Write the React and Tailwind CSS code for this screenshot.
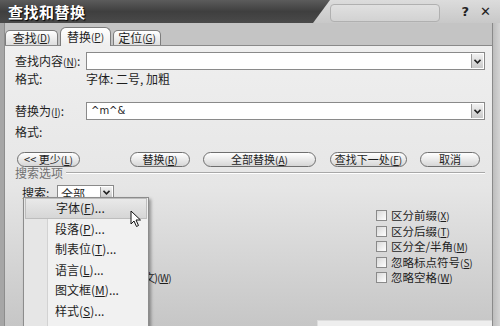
import React from 'react';

const font = { fontFamily: '"Noto Sans CJK SC", "Noto Sans", sans-serif' };

function Key({ k }) {
  return <span className="text-[10px]">(<span className="underline">{k}</span>)</span>;
}

function Arrow() {
  return (
    <div className="w-[12px] h-full flex items-center justify-center bg-gradient-to-b from-[#f2f2f2] to-[#c9c9c9] border-l border-[#9a9a9a]">
      <svg width="7" height="5" viewBox="0 0 7 5">
        <path d="M0.5 0.8 L3.5 3.8 L6.5 0.8" fill="none" stroke="#222" strokeWidth="1.6" />
      </svg>
    </div>
  );
}

function Pill({ children, className = '' }) {
  return (
    <div className={`h-[15px] rounded-full border border-[#6f6f6f] bg-gradient-to-b from-white to-[#d6d6d6] flex items-center justify-center text-[11px] leading-none text-[#1e1e1e] ${className}`}>
      {children}
    </div>
  );
}

function Check({ label, k }) {
  return (
    <div className="h-[15.5px] flex items-center gap-[4px]">
      <div className="w-[11px] h-[11px] border border-[#8a8a8a] bg-gradient-to-br from-[#d9d9d9] to-white" />
      <span className="text-[11.5px] leading-none text-[#1e1e1e]">{label}<Key k={k} /></span>
    </div>
  );
}

const menuItems = [
  ['字体', 'F'],
  ['段落', 'P'],
  ['制表位', 'T'],
  ['语言', 'L'],
  ['图文框', 'M'],
  ['样式', 'S'],
];

export default function App() {
  return (
    <div style={font} className="w-[500px] h-[326px] relative overflow-hidden bg-[#c4c4c4] select-none">
      {/* title bar */}
      <div className="h-[23px] flex relative bg-gradient-to-b from-[#dcdcdc] to-[#c8c8c8]">
        <div className="w-[330px] h-full bg-gradient-to-b from-[#5c5c5c] via-[#3f3f3f] to-[#4a4a4a] [clip-path:polygon(0_0,330px_0,313px_100%,0_100%)] flex items-center pl-[8px]">
          <span className="text-white text-[15px] font-bold leading-none tracking-[0.5px] [text-shadow:1px_1px_1px_#000]">查找和替换</span>
        </div>
        <div className="mt-[4px] w-[110px] h-[18px] rounded-[4px] border border-[#b0b0b0] bg-gradient-to-b from-[#e0e0e0] to-[#d2d2d2]" />
        <div className="ml-auto flex items-center gap-[11px] pr-[9px] text-[#222] font-bold" style={{ fontFamily: '"DejaVu Sans", sans-serif' }}>
          <span className="text-[13px] leading-none">?</span>
          <span className="text-[13px] leading-none">✕</span>
        </div>
      </div>

      <div className="flex h-[303px]">
        <div className="w-[5px] bg-[#a6a6a6] border-r border-[#8d8d8d]" />
        <div className="flex-1 flex flex-col">
          {/* tabs */}
          <div className="h-[22px] flex items-end gap-[2px] text-[12px] leading-none text-[#1e1e1e]">
            <div className="w-[53px] h-[15px] rounded-t-[5px] border border-b-0 border-[#7d7d7d] bg-gradient-to-b from-white to-[#dedede] flex items-center justify-center">
              查找<Key k="D" />
            </div>
            <div className="w-[51px] h-[19px] rounded-t-[6px] border border-b-0 border-[#7d7d7d] bg-gradient-to-b from-white to-[#eeeeee] flex items-center justify-center relative top-[1px] z-10">
              替换<Key k="P" />
            </div>
            <div className="w-[48px] h-[15px] rounded-t-[5px] border border-b-0 border-[#7d7d7d] bg-gradient-to-b from-white to-[#dedede] flex items-center justify-center">
              定位<Key k="G" />
            </div>
          </div>

          {/* panel */}
          <div className="flex-1 border-t border-[#8a8a8a] bg-gradient-to-b from-[#efefef] via-[#e6e6e6] to-[#c6c6c6] pl-[10px] pr-[7px] text-[12px] text-[#1e1e1e] flex flex-col">
            <div className="mt-[6px] h-[18px] flex items-center">
              <span className="w-[71px] leading-none">查找内容<Key k="N" />:</span>
              <div className="flex-1 h-full bg-white border border-[#8a8a8a] flex justify-end p-[1px]"><Arrow /></div>
            </div>
            <div className="h-[17px] flex items-center leading-none">
              <span className="w-[71px]">格式:</span>
              <span>字体: 二号, 加粗</span>
            </div>
            <div className="mt-[15px] h-[18px] flex items-center">
              <span className="w-[71px] leading-none">替换为<Key k="I" />:</span>
              <div className="flex-1 h-full bg-white border border-[#8a8a8a] flex items-center justify-between p-[1px]">
                <span className="pl-[3px] text-[10px] leading-none" style={{ fontFamily: '"DejaVu Sans", sans-serif' }}>^m^&amp;</span>
                <Arrow />
              </div>
            </div>
            <div className="mt-[4px] h-[16px] flex items-center leading-none">
              <span className="w-[71px]">格式:</span>
            </div>

            {/* buttons */}
            <div className="mt-[12px] flex">
              <Pill className="ml-[2px] w-[63px]">&lt;&lt; 更少<Key k="L" /></Pill>
              <Pill className="ml-[50px] w-[60px]">替换<Key k="R" /></Pill>
              <Pill className="ml-[13px] w-[113px]">全部替换<Key k="A" /></Pill>
              <Pill className="ml-[14px] w-[77px]">查找下一处<Key k="F" /></Pill>
              <Pill className="ml-[13px] w-[60px]">取消</Pill>
            </div>

            <div className="h-[12px] flex items-center">
              <span className="text-[#707070] leading-none">搜索选项</span>
              <div className="flex-1 ml-[3px] border-t border-[#a8a8a8] border-b border-b-white" />
            </div>

            <div className="mt-[6px] h-[15px] flex items-center ml-[7px]">
              <span className="w-[35px] leading-none">搜索:</span>
              <div className="w-[57px] h-full bg-white border border-[#8a8a8a] flex justify-between p-[1px]">
                <span className="pl-[2px] leading-none text-[12px] pt-[1px]">全部</span>
                <Arrow />
              </div>
            </div>

            <div className="mt-[8px] flex">
              {/* left option column, mostly hidden by the menu */}
              <div className="ml-[8px] w-[353px] flex flex-col">
                <div className="h-[62px]" />
                <div className="h-[15.5px] flex items-center gap-[4px]">
                  <div className="w-[11px] h-[11px] border border-[#8a8a8a] bg-white" />
                  <span className="text-[11px] leading-none tracking-[-0.7px]">查找单词的所有形式(英文)<Key k="W" /></span>
                </div>
              </div>
              <div className="flex flex-col">
                <Check label="区分前缀" k="X" />
                <Check label="区分后缀" k="T" />
                <Check label="区分全/半角" k="M" />
                <Check label="忽略标点符号" k="S" />
                <Check label="忽略空格" k="W" />
              </div>
            </div>
          </div>
        </div>
        <div className="w-[8px] border-l border-[#8a8a8a] bg-gradient-to-r from-[#bdbdbd] to-[#d4d4d4]" />
      </div>

      {/* format dropdown menu */}
      <div className="absolute left-[23px] top-[197px] w-[126px] h-[150px] bg-[#f1f1f1] border border-[#8c8c8c] shadow-[2px_2px_3px_rgba(0,0,0,0.35)] flex">
        <div className="w-[24px] bg-[#e6e6e6] border-r border-[#d2d2d2]" />
        <div className="absolute left-0 right-0 top-0 flex flex-col text-[12px] text-[#1e1e1e]">
          {menuItems.map(([t, k], i) => (
            <div
              key={t}
              className={`h-[20.5px] flex items-center leading-none ${i === 0 ? 'bg-gradient-to-b from-[#e9e9e9] to-[#d6d6d6] border border-[#bdbdbd] mx-[1px] pl-[30px]' : 'pl-[31px]'}`}
            >
              {t}(<span className="underline">{k}</span>)...
            </div>
          ))}
        </div>
      </div>

      {/* mouse cursor */}
      <svg className="absolute left-[130px] top-[210px]" width="12" height="18" viewBox="0 0 12 18">
        <path d="M1 1 L1 14 L4 11 L6.5 16.5 L8.5 15.5 L6 10 L10.5 10 Z" fill="#fff" stroke="#111" strokeWidth="1" strokeLinejoin="round" />
      </svg>

      {/* window behind at bottom right */}
      <div className="absolute left-[317px] top-[320px] w-[175px] h-[10px] bg-[#eeeeee] border-t border-l border-[#dcdcdc]" />
    </div>
  );
}
